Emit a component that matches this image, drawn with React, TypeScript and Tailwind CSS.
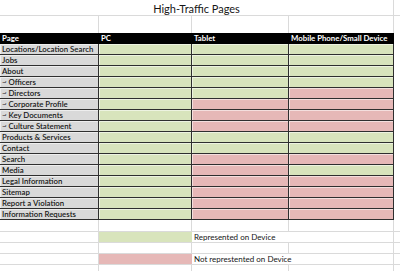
const G = 'bg-[#d8e4bc]'
const P = 'bg-[#e6b8b7]'

const rows: [string, boolean, boolean, boolean][] = [
  ['Locations/Location Search', true, true, true],
  ['Jobs', true, true, true],
  ['About', true, true, true],
  ['~ Officers', true, true, true],
  ['~ Directors', true, true, false],
  ['~ Corporate Profile', true, false, false],
  ['~ Key Documents', true, false, false],
  ['~ Culture Statement', true, false, false],
  ['Products & Services', true, true, true],
  ['Contact', true, true, true],
  ['Search', true, false, false],
  ['Media', true, false, true],
  ['Legal Information', true, false, false],
  ['Sitemap', true, false, false],
  ['Report a Violation', true, false, false],
  ['Information Requests', true, false, false],
]

const cols = ['w-[99px]', 'w-[93px]', 'w-[97px]', 'w-[105px]']

function Cell({ w, color, children }: { w: string; color: string; children?: React.ReactNode }) {
  return (
    <div
      className={`${w} ${color} h-full shrink-0 border-r border-b border-[#2f2f2f] shadow-[inset_1px_1px_0_rgba(255,255,255,0.55)] pl-[2px] leading-[10px] whitespace-nowrap`}
    >
      {children}
    </div>
  )
}

function GridRow({ h, children }: { h: string; children?: React.ReactNode }) {
  return <div className={`flex ${h} border-b border-[#dadada]`}>{children}</div>
}

function Blank({ w }: { w: string }) {
  return <div className={`${w} h-full shrink-0 border-r border-[#dadada]`} />
}

export default function App() {
  return (
    <div
      className="w-[400px] h-[271px] bg-white overflow-hidden text-[#161616]"
      style={{ fontFamily: 'Lato, "Open Sans", sans-serif' }}
    >
      {/* Title */}
      <div className="flex h-[16px] border-b border-[#dadada]">
        <div className="w-[394px] shrink-0 border-r border-[#dadada] text-center text-[11px] leading-[16px] pt-[1px]">
          High-Traffic Pages
        </div>
      </div>
      {/* Empty row */}
      <div className="flex h-[17px]">
        {cols.map((c) => (
          <Blank key={c} w={c} />
        ))}
      </div>
      {/* Header */}
      <div className="flex h-[11px]">
        <div className="flex w-[394px] bg-black text-white font-bold text-[7.8px] leading-[11px] whitespace-nowrap">
          <div className="w-[99px] shrink-0 pl-[2px]">Page</div>
          <div className="w-[93px] shrink-0 pl-[2px]">PC</div>
          <div className="w-[97px] shrink-0 pl-[2px]">Tablet</div>
          <div className="w-[105px] shrink-0 pl-[2px]">Mobile Phone/Small Device</div>
        </div>
      </div>
      {/* Data */}
      {rows.map(([name, pc, tab, mob]) => (
        <div key={name} className="flex h-[11px] text-[7.8px] font-semibold">
          <Cell w={cols[0]} color="bg-[#d9d9d9]">
            {name}
          </Cell>
          <Cell w={cols[1]} color={pc ? G : P} />
          <Cell w={cols[2]} color={tab ? G : P} />
          <Cell w={cols[3]} color={mob ? G : P} />
        </div>
      ))}
      {/* Legend */}
      <GridRow h="h-[12px]">
        {cols.map((c) => (
          <Blank key={c} w={c} />
        ))}
      </GridRow>
      <GridRow h="h-[11px]">
        <Blank w={cols[0]} />
        <div className={`${cols[1]} ${G} h-full shrink-0`} />
        <div className="w-[202px] shrink-0 border-r border-[#dadada] pl-[2px] text-[8px] leading-[10px] whitespace-nowrap">
          Represented on Device
        </div>
      </GridRow>
      <GridRow h="h-[11px]">
        {cols.map((c) => (
          <Blank key={c} w={c} />
        ))}
      </GridRow>
      <GridRow h="h-[11px]">
        <Blank w={cols[0]} />
        <div className={`${cols[1]} ${P} h-full shrink-0`} />
        <div className="w-[202px] shrink-0 border-r border-[#dadada] pl-[2px] text-[8px] leading-[10px] whitespace-nowrap">
          Not represtented on Device
        </div>
      </GridRow>
      <GridRow h="h-[11px]">
        {cols.map((c) => (
          <Blank key={c} w={c} />
        ))}
      </GridRow>
    </div>
  )
}
